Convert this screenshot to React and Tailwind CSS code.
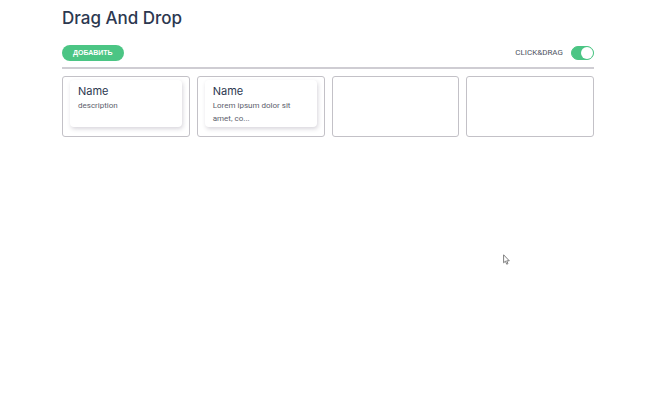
import { useState } from "react";

const columns = [
  { name: "Name", description: "description" },
  { name: "Name", description: "Lorem ipsum dolor sit amet, co..." },
  null,
  null,
];

function Header({ enabled, onToggle }) {
  return (
    <header className="border-b-2 border-[#cfcdd3] pb-[6px]">
      <h1 className="text-[17px] leading-5 font-medium text-[#2c3850]">Drag And Drop</h1>
      <div className="mt-[17px] flex items-center justify-between">
        <button
          type="button"
          className="h-4 rounded-full bg-[#4bc584] px-[11px] font-['Liberation_Sans',sans-serif] text-[7px] leading-4 font-bold text-white uppercase"
        >
          Добавить
        </button>
        <label className="flex cursor-pointer items-center gap-2 font-[Roboto,sans-serif] text-[8px] leading-4 text-[#4e5361]">
          CLICK&amp;DRAG
          <input
            type="checkbox"
            checked={enabled}
            onChange={onToggle}
            className="h-[14px] w-[23px] appearance-none rounded-full border border-[#4bc584] bg-gray-300 before:block before:size-3 before:rounded-full before:bg-white checked:bg-[#4bc584] checked:before:ml-auto"
          />
        </label>
      </div>
    </header>
  );
}

function Card({ name, description }) {
  return (
    <article className="h-[47px] rounded-sm bg-white px-2 pt-1 shadow-[1px_2px_4px_0px_rgba(60,50,80,0.2)]">
      <h2 className="text-[11px] leading-[15px] text-[#2c3850]">{name}</h2>
      <p className="font-[Roboto,sans-serif] text-[8px] leading-[13px] text-[#5c606c]">{description}</p>
    </article>
  );
}

export default function App() {
  const [enabled, setEnabled] = useState(true);

  return (
    <div className="relative min-h-screen bg-white pr-2 font-['Inter',sans-serif]">
      <main className="mx-auto max-w-[532px] pt-2">
        <Header enabled={enabled} onToggle={() => setEnabled(!enabled)} />
        <div className="mt-[7px] grid grid-cols-4 gap-[7px]">
          {columns.map((card, index) => (
            <section
              key={index}
              className="min-h-[61px] rounded-[3px] border border-[#c3c1c7] px-[7px] pt-[3px]"
            >
              {card && <Card name={card.name} description={card.description} />}
            </section>
          ))}
        </div>
      </main>
      <svg
        className="pointer-events-none absolute top-[254px] left-[503px] h-[11px] w-[7px]"
        viewBox="0 0 7 11"
        aria-hidden="true"
      >
        <path
          d="M.6.8v8l1.8-1.6 1.3 3 1.3-.6-1.3-2.8h2.6z"
          fill="white"
          stroke="#707070"
          strokeWidth=".9"
        />
      </svg>
    </div>
  );
}
